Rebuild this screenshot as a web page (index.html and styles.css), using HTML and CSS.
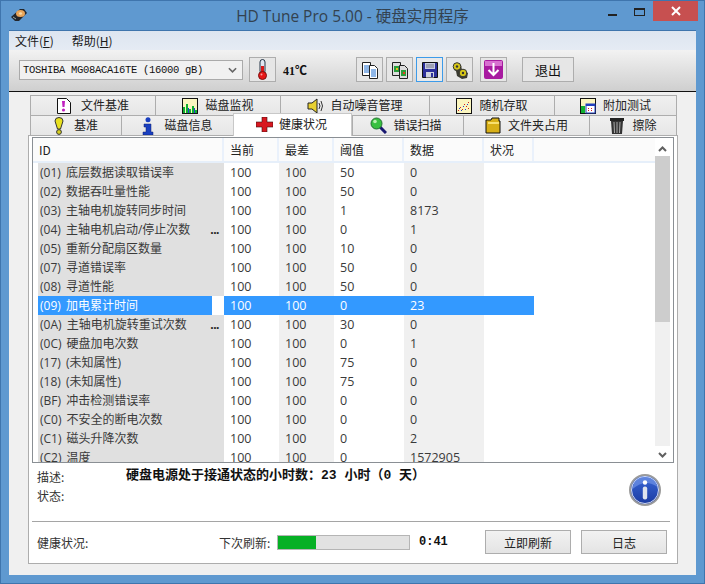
FILE: index.html
```html
<!DOCTYPE html>
<html lang="zh">
<head>
<meta charset="utf-8">
<title>HD Tune Pro 5.00 - 硬盘实用程序</title>
<link rel="stylesheet" href="styles.css">
</head>
<body>
<div class="window">
  <header class="titlebar">
    <svg class="app-icon" viewBox="0 0 16 14" width="16" height="14"><path d="M0 9 9 1h4l3 4-8 8H4z" fill="#23262b"/><ellipse cx="9.5" cy="5.5" rx="4.5" ry="3.6" fill="#e8a55a"/><ellipse cx="9.5" cy="5.5" rx="1.6" ry="1.2" fill="#f6d9a8"/><path d="M2 9l3 2" stroke="#9aa" stroke-width="1"/></svg>
    <div class="title">HD Tune Pro 5.00 - 硬盘实用程序</div>
    <div class="win-controls">
      <span class="win-min"></span>
      <span class="win-max"></span>
      <span class="win-close">
        <svg viewBox="0 0 10 10" width="10" height="10"><path d="M1 1l8 8M9 1L1 9" stroke="#fff" stroke-width="2"/></svg>
      </span>
    </div>
  </header>

  <div class="client">
    <nav class="menubar">
      <span class="menu-item">文件(<u>F</u>)</span>
      <span class="menu-item">帮助(<u>H</u>)</span>
    </nav>

    <div class="toolbar">
      <div class="combo">
        <span class="combo-text">TOSHIBA MG08ACA16TE (16000 gB)</span>
        <svg viewBox="0 0 10 6" width="9" height="6"><path d="M1 1l4 4 4-4" fill="none" stroke="#666" stroke-width="1.8"/></svg>
      </div>
      <button class="tool-btn">
        <svg viewBox="0 0 11 21" width="11" height="21"><rect x="3" y=".5" width="5" height="14" rx="2.5" fill="#dfe6f0" stroke="#234"/><rect x="4" y="7" width="3" height="9" fill="#d81818"/><circle cx="5.500" cy="16.500" r="4" fill="#e81818" stroke="#7a1010"/><circle cx="4.500" cy="15.500" r="1" fill="#f8a0a0"/></svg>
      </button>
      <span class="temp">41℃</span>
      <div class="tool-group">
        <button class="tool-btn">
          <svg viewBox="0 0 18 18" width="18" height="18"><path d="M1.5 1.5h8v13h-8z" fill="#fff" stroke="#222"/><path d="M3 5h5M3 7h5M3 9h5M3 11h5" stroke="#1e6fd0"/><path d="M8.5 4.5h5l3 3v10h-8z" fill="#fff" stroke="#222"/><path d="M10 9h5M10 11h5M10 13h5M10 15h5" stroke="#1e6fd0"/></svg>
        </button>
        <button class="tool-btn">
          <svg viewBox="0 0 18 18" width="18" height="18"><path d="M1.5 1.5h8v13h-8z" fill="#ddd" stroke="#222"/><rect x="3" y="5" width="5" height="6" fill="#2a9d3a"/><rect x="5" y="7" width="2" height="2" fill="#e8c020"/><path d="M8.5 4.5h5l3 3v10h-8z" fill="#ddd" stroke="#222"/><rect x="10" y="9" width="5" height="6" fill="#2a9d3a"/><rect x="12" y="11" width="2" height="2" fill="#e04020"/></svg>
        </button>
        <button class="tool-btn is-focus">
          <svg viewBox="0 0 16 16" width="16" height="16"><path d="M0.5 0.5h15v15h-15z" fill="#2c2f9a" stroke="#111"/><rect x="3" y="1" width="10" height="6" fill="#c8cce0"/><path d="M4 3h8M4 5h8" stroke="#778"/><rect x="4" y="10" width="8" height="5.5" fill="#cfd2de"/><rect x="9" y="11" width="2" height="4" fill="#2c2f9a"/></svg>
        </button>
        <button class="tool-btn">
          <svg viewBox="0 0 18 18" width="18" height="18"><path d="M3 9l1-7 6 2 1 5 6 3-1 5-5 1-5-3-1-5z" fill="#3a3a30"/><circle cx="6" cy="5.500" r="3.800" fill="#d8c818" stroke="#333"/><circle cx="12" cy="12" r="3.800" fill="#d8c818" stroke="#333"/><circle cx="6" cy="5.500" r="1.200" fill="#333"/><circle cx="12" cy="12" r="1.200" fill="#333"/></svg>
        </button>
      </div>
      <button class="tool-btn tool-btn-gap">
        <svg viewBox="0 0 19 19" width="19" height="19"><rect width="19" height="19" rx="2" fill="#a81aa0"/><path d="M1 1h17v5H1z" fill="#d870d0"/><path d="M9.500 3v12M4.500 10l5 5 5-5" fill="none" stroke="#fff" stroke-width="2"/></svg>
      </button>
      <button class="tool-btn exit-btn">退出</button>
    </div>

    <div class="tab-area">
      <div class="tab-row">
        <div class="tab w125 g10">
          <svg viewBox="0 0 14 16" width="14" height="16"><path d="M.5.5h9l4 4v11H.5z" fill="#fff" stroke="#111"/><path d="M5 3h3l-.5 6h-2z" fill="#c020c0"/><circle cx="6.5" cy="12" r="1.6" fill="#c020c0"/></svg><span>文件基准</span>
        </div>
        <div class="tab w125">
          <svg viewBox="0 0 16 16" width="16" height="16"><rect x=".5" y=".5" width="15" height="15" fill="#fbf6c0" stroke="#111"/><path d="M1 15V9h2v6zM4 15V6h2v9zM7 15v-4h2v4zM10 15V8h2v7zM13 15v-3h2v3z" fill="#10b030"/><path d="M6 15v-5h1v5zM12 15v-5h1v5z" fill="#2040d0"/></svg><span>磁盘监视</span>
        </div>
        <div class="tab w149">
          <svg viewBox="0 0 16 16" width="16" height="16"><path d="M1 5h4l5-4v14l-5-4H1z" fill="#e8d030" stroke="#222"/><path d="M12 5q2 3 0 6M14 3q3 5 0 10" fill="none" stroke="#333"/></svg><span>自动噪音管理</span>
        </div>
        <div class="tab w125">
          <svg viewBox="0 0 16 16" width="16" height="16"><rect x=".5" y=".5" width="15" height="15" fill="#fbf6c0" stroke="#111"/><path d="M2 12h1v1H2zM4 9h1v1H4zM6 11h1v1H6zM8 6h1v1H8zM10 8h1v1h-1zM12 4h1v1h-1zM12 10h1v1h-1z" fill="#d02020"/><path d="M3 10h1v1H3zM5 12h1v1H5zM7 8h1v1H7zM9 11h1v1H9zM11 6h1v1h-1z" fill="#2040d0"/></svg><span>随机存取</span>
        </div>
        <div class="tab w123">
          <svg viewBox="0 0 16 16" width="16" height="16"><rect x=".5" y=".5" width="15" height="15" fill="#fbf6c0" stroke="#111"/><path d="M1 15V8h4v7z" fill="#10b030"/><rect x="6" y="6" width="9" height="9" fill="#fff" stroke="#2040c0"/><path d="M6 6h9v2H6z" fill="#2040c0"/><path d="M8 10h1v1H8zM11 10h1v1h-1zM8 12h1v1H8zM11 12h1v1h-1z" fill="#d02020"/></svg><span>附加测试</span>
        </div>
      </div>
      <div class="tab-row">
        <div class="tab w91 g10">
          <svg viewBox="0 0 10 18" width="10" height="18"><path d="M1 4q0-3.500 4-3.500T9 4L6.500 12h-3z" fill="#e8e020" stroke="#333"/><circle cx="5" cy="15" r="2.400" fill="#d8d020" stroke="#333"/></svg><span>基准</span>
        </div>
        <div class="tab w112 g10">
          <svg viewBox="0 0 12 18" width="12" height="18"><circle cx="6" cy="2.800" r="2.500" fill="#1a40c0"/><path d="M2 7h7v8h2v3H1v-3h3v-5H2z" fill="#1a40c0" stroke="#102070" stroke-width=".5"/></svg><span>磁盘信息</span>
        </div>
        <div class="tab tab-active w119 g6">
          <svg viewBox="0 0 17 15" width="17" height="15"><path d="M6 0h5v5h6v5h-6v5H6v-5H0V5h6z" fill="#d81820" stroke="#3a1010" stroke-width=".6"/></svg><span>健康状况</span>
        </div>
        <div class="tab w111 g6 tab-scan">
          <svg viewBox="0 0 17 17" width="17" height="17"><path d="M10 10l6 6" stroke="#181870" stroke-width="3"/><circle cx="6.500" cy="6.500" r="5.500" fill="#38c040" stroke="#207030"/><circle cx="5" cy="4.500" r="1.800" fill="#b8f0b0"/></svg><span>错误扫描</span>
        </div>
        <div class="tab w126">
          <svg viewBox="0 0 16 17" width="16" height="17"><path d="M1 3h5l1-2h7v3h1v12H1z" fill="#d8b018" stroke="#111"/><path d="M3 5h11v2H3z" fill="#f8e070"/></svg><span>文件夹占用</span>
        </div>
        <div class="tab w88">
          <svg viewBox="0 0 16 17" width="16" height="17"><path d="M1 1h14v3H1z" fill="#222"/><path d="M2 4h12l-1 13H3z" fill="#333"/><path d="M5 5l.5 11M8 5v11M11 5l-.5 11" stroke="#aaa"/></svg><span>擦除</span>
        </div>
      </div>

      <div class="panel">
        <div class="listbox">
          <div class="list-main">
            <div class="list-head">
              <span class="hcell c-id">ID</span>
              <span class="hcell c-cur">当前</span>
              <span class="hcell c-worst">最差</span>
              <span class="hcell c-thr">阈值</span>
              <span class="hcell c-data">数据</span>
              <span class="hcell c-status">状况</span>
            </div>
            <div class="row"><span class="cell c-id"><span>(01) 底层数据读取错误率</span></span><span class="cell c-cur">100</span><span class="cell c-worst">100</span><span class="cell c-thr">50</span><span class="cell c-data">0</span><span class="cell c-status"></span></div>
            <div class="row"><span class="cell c-id"><span>(02) 数据吞吐量性能</span></span><span class="cell c-cur">100</span><span class="cell c-worst">100</span><span class="cell c-thr">50</span><span class="cell c-data">0</span><span class="cell c-status"></span></div>
            <div class="row"><span class="cell c-id"><span>(03) 主轴电机旋转同步时间</span></span><span class="cell c-cur">100</span><span class="cell c-worst">100</span><span class="cell c-thr">1</span><span class="cell c-data">8173</span><span class="cell c-status"></span></div>
            <div class="row"><span class="cell c-id"><span>(04) 主轴电机启动/停止次数</span><b class="more">...</b></span><span class="cell c-cur">100</span><span class="cell c-worst">100</span><span class="cell c-thr">0</span><span class="cell c-data">1</span><span class="cell c-status"></span></div>
            <div class="row"><span class="cell c-id"><span>(05) 重新分配扇区数量</span></span><span class="cell c-cur">100</span><span class="cell c-worst">100</span><span class="cell c-thr">10</span><span class="cell c-data">0</span><span class="cell c-status"></span></div>
            <div class="row"><span class="cell c-id"><span>(07) 寻道错误率</span></span><span class="cell c-cur">100</span><span class="cell c-worst">100</span><span class="cell c-thr">50</span><span class="cell c-data">0</span><span class="cell c-status"></span></div>
            <div class="row"><span class="cell c-id"><span>(08) 寻道性能</span></span><span class="cell c-cur">100</span><span class="cell c-worst">100</span><span class="cell c-thr">50</span><span class="cell c-data">0</span><span class="cell c-status"></span></div>
            <div class="row row-selected"><span class="cell c-id"><span>(09) 加电累计时间</span></span><span class="cell c-cur">100</span><span class="cell c-worst">100</span><span class="cell c-thr">0</span><span class="cell c-data">23</span><span class="cell c-status"></span></div>
            <div class="row"><span class="cell c-id"><span>(0A) 主轴电机旋转重试次数</span><b class="more">...</b></span><span class="cell c-cur">100</span><span class="cell c-worst">100</span><span class="cell c-thr">30</span><span class="cell c-data">0</span><span class="cell c-status"></span></div>
            <div class="row"><span class="cell c-id"><span>(0C) 硬盘加电次数</span></span><span class="cell c-cur">100</span><span class="cell c-worst">100</span><span class="cell c-thr">0</span><span class="cell c-data">1</span><span class="cell c-status"></span></div>
            <div class="row"><span class="cell c-id"><span>(17) (未知属性)</span></span><span class="cell c-cur">100</span><span class="cell c-worst">100</span><span class="cell c-thr">75</span><span class="cell c-data">0</span><span class="cell c-status"></span></div>
            <div class="row"><span class="cell c-id"><span>(18) (未知属性)</span></span><span class="cell c-cur">100</span><span class="cell c-worst">100</span><span class="cell c-thr">75</span><span class="cell c-data">0</span><span class="cell c-status"></span></div>
            <div class="row"><span class="cell c-id"><span>(BF) 冲击检测错误率</span></span><span class="cell c-cur">100</span><span class="cell c-worst">100</span><span class="cell c-thr">0</span><span class="cell c-data">0</span><span class="cell c-status"></span></div>
            <div class="row"><span class="cell c-id"><span>(C0) 不安全的断电次数</span></span><span class="cell c-cur">100</span><span class="cell c-worst">100</span><span class="cell c-thr">0</span><span class="cell c-data">0</span><span class="cell c-status"></span></div>
            <div class="row"><span class="cell c-id"><span>(C1) 磁头升降次数</span></span><span class="cell c-cur">100</span><span class="cell c-worst">100</span><span class="cell c-thr">0</span><span class="cell c-data">2</span><span class="cell c-status"></span></div>
            <div class="row"><span class="cell c-id"><span>(C2) 温度</span></span><span class="cell c-cur">100</span><span class="cell c-worst">100</span><span class="cell c-thr">0</span><span class="cell c-data">1572905</span><span class="cell c-status"></span></div>
          </div>
          <div class="scrollbar">
            <svg class="sb-arrow" viewBox="0 0 9 6" width="9" height="6"><path d="M1 5l3.500-3.500L8 5" fill="none" stroke="#606060" stroke-width="2"/></svg>
            <div class="sb-track"><div class="sb-thumb"></div></div>
            <svg class="sb-arrow" viewBox="0 0 9 6" width="9" height="6"><path d="M1 1l3.500 3.500L8 1" fill="none" stroke="#606060" stroke-width="2"/></svg>
          </div>
        </div>

        <div class="details">
          <div class="labels">
            <div>描述:</div>
            <div>状态:</div>
          </div>
          <div class="desc">硬盘电源处于接通状态的小时数：23 小时（0 天）</div>
          <svg class="info-icon" viewBox="0 0 32 32" width="32" height="32">
            <defs>
              <linearGradient id="infoFill" x1="0" y1="0" x2="0" y2="1"><stop offset="0" stop-color="#3a68d8"/><stop offset="1" stop-color="#1a3aa0"/></linearGradient>
            </defs>
            <circle cx="16" cy="16" r="15" fill="url(#infoFill)" stroke="#9a9a9a" stroke-width="2"/>
            <circle cx="16" cy="16" r="13.500" fill="none" stroke="#fff" stroke-width=".8"/>
            <path d="M3.500 15Q16 4 28.500 13 26 3 16 3 5 3 3.500 15z" fill="#6f93e6" opacity=".7"/>
            <circle cx="16" cy="8.500" r="2.200" fill="#fff"/>
            <rect x="13.800" y="12.500" width="4.400" height="13" rx="2" fill="#dfe4ee"/>
          </svg>
        </div>

        <div class="status">
          <span class="status-label">健康状况:</span>
          <span class="refresh-label">下次刷新:</span>
          <div class="progress"><div class="progress-fill"></div></div>
          <span class="countdown">0:41</span>
          <button class="action-btn">立即刷新</button>
          <button class="action-btn">日志</button>
        </div>
      </div>
    </div>
  </div>
</div>
</body>
</html>
```

FILE: styles.css
```css
* { box-sizing: border-box; }
html, body { margin: 0; padding: 0; }
body {
  width: 705px;
  height: 584px;
  overflow: hidden;
  font: 12px "Noto Sans CJK SC", "Open Sans", sans-serif;
  color: #222;
}
.window {
  width: 705px;
  height: 584px;
  display: flex;
  flex-direction: column;
  padding: 0 8px 8px;
  background: #5f99d0;
  border: 1px solid #3f75ad;
}
.titlebar {
  height: 29px;
  flex: none;
  display: flex;
  align-items: center;
  position: relative;
  margin: 0 -8px;
  padding-left: 10px;
}
.app-icon { flex: none; margin-top: -1px; }
.title {
  position: absolute;
  left: 0;
  right: 0;
  top: 4px;
  text-align: center;
  font: 15.500px/22px "Open Sans", "Noto Sans CJK SC", sans-serif;
  color: #33424f;
}
.win-controls {
  position: absolute;
  right: 6px;
  top: 0;
  display: flex;
  align-items: flex-start;
}
.win-min {
  width: 9px;
  height: 2px;
  background: #222;
  margin: 13px 17px 0 0;
}
.win-max {
  width: 11px;
  height: 8px;
  border: 1px solid #222;
  border-top-width: 2px;
  margin: 7px 8px 0 0;
}
.win-close {
  width: 45px;
  height: 20px;
  background: #c75050;
  display: flex;
  align-items: center;
  justify-content: center;
}
.client {
  flex: 1;
  display: flex;
  flex-direction: column;
  background: #f0f0f0;
  border-top: 1px solid #3f75ad;
  min-height: 0;
}
.menubar {
  height: 19px;
  flex: none;
  display: flex;
  align-items: center;
  gap: 18px;
  padding-left: 6px;
  background: linear-gradient(#dde5f0, #e5ebf4);
  color: #1a1a1a;
}
.menu-item { line-height: 19px; }
.toolbar {
  height: 42px;
  flex: none;
  display: flex;
  align-items: center;
  padding: 0 0 2px 10px;
  background: linear-gradient(#f2f2f2, #cfcfcf);
  border-bottom: 1px solid #111;
}
.combo {
  width: 224px;
  height: 20px;
  display: flex;
  align-items: center;
  justify-content: space-between;
  padding: 0 5px 0 3px;
  background: #f1f1f1;
  border: 1px solid #aaa;
}
.combo-text {
  font: 10.500px "Liberation Mono", monospace;
  color: #111;
  white-space: nowrap;
  letter-spacing: -.3px;
}
.tool-btn {
  width: 27px;
  height: 25px;
  padding: 0;
  flex: none;
  display: flex;
  align-items: center;
  justify-content: center;
  background: #e6e6e6;
  border: 1px solid #adadad;
  font: inherit;
  color: #111;
}
.toolbar > .tool-btn:nth-child(2) { margin-left: 6px; }
.is-focus { border-color: #3d9be9; background: #e9e9e9; }
.temp {
  width: 73px;
  margin-left: 7px;
  font: bold 12px "Liberation Serif", "Noto Sans CJK SC", serif;
  color: #111;
}
.tool-group { display: flex; gap: 3px; }
.tool-btn-gap { margin-left: 7px; }
.exit-btn { width: 52px; margin-left: 15px; font-size: 13px; }

.tab-area {
  flex: 1;
  display: flex;
  flex-direction: column;
  padding: 3px 18px 11px 19px;
  min-height: 0;
}
.tab-row {
  height: 20px;
  display: flex;
  margin: 0 2px;
  flex: none;
}
.tab {
  height: 20px;
  flex: none;
  display: flex;
  align-items: center;
  justify-content: center;
  gap: 7px;
  background: linear-gradient(#f0f0f0, #e6e6e6);
  border: 1px solid #adadad;
  border-right-width: 0;
  border-bottom-width: 0;
  white-space: nowrap;
  color: #222;
  font-size: 12px;
  line-height: 18px;
}
.tab span { margin-top: -1px; }
.g6 { gap: 6px; }
.g10 { gap: 10px; }
.tab-scan { padding-right: 4px; }
.tab:last-child { border-right-width: 1px; }
.tab-active {
  height: 23px;
  margin-top: -2px;
  background: #fff;
  border-right-width: 1px;
  border-color: #c8c8c8;
  position: relative;
  z-index: 1;
  padding: 0 2px 2px 0;
}
.w88 { width: 88px; }
.w91 { width: 91px; }
.w111 { width: 111px; }
.w112 { width: 112px; }
.w119 { width: 119px; }
.w123 { width: 123px; }
.w125 { width: 125px; }
.w126 { width: 126px; }
.w149 { width: 149px; }

.panel {
  flex: 1;
  display: flex;
  flex-direction: column;
  background: #fff;
  border: 1px solid #adadad;
  padding: 1px 3px 0 3px;
  min-height: 0;
}
.listbox {
  height: 326px;
  flex: none;
  display: flex;
  background: #fff;
  border: 1px solid #8a8f94;
  overflow: hidden;
}
.list-main { flex: 1; min-width: 0; overflow: hidden; }
.list-head {
  height: 25px;
  display: flex;
  background: #fbfbfb;
  border-bottom: 2px solid #e6effa;
}
.hcell {
  display: block;
  padding: 3px 0 0 6px;
  font-size: 12px;
  line-height: 18px;
  border-right: 2px solid #eaf1fb;
  color: #222;
}
.row { height: 19px; display: flex; }
.cell {
  display: block;
  padding-left: 6px;
  font: 12.500px/19px "Open Sans", "Noto Sans CJK SC", sans-serif;
  color: #3a3a3a;
  white-space: nowrap;
}
.c-id { width: 191px; flex: none; }
.c-cur { width: 55px; flex: none; }
.c-worst { width: 55px; flex: none; }
.c-thr { width: 70px; flex: none; }
.c-data { width: 80px; flex: none; }
.c-status { width: 50px; flex: none; }
.cell.c-id {
  display: flex;
  justify-content: space-between;
  margin-left: 5px;
  width: 186px;
  padding: 0 5px 0 2px;
  background: #e0e0e0;
  font-size: 12px;
  word-spacing: 2px;
}
.more { font-weight: bold; color: #222; letter-spacing: -.5px; }
.cell.c-worst, .cell.c-data { background: #f0f0f0; }
.row-selected .cell { background: #3399ff; color: #fff; }
.row-selected .cell.c-id { background: linear-gradient(90deg, #3399ff 174px, #fff 174px); }
.scrollbar {
  width: 15px;
  flex: none;
  margin: 1px 3px 0 0;
  display: flex;
  flex-direction: column;
  align-items: center;
  background: #fff;
}
.sb-arrow { flex: none; margin: 7px 0 4px; }
.sb-arrow:last-child { margin: 6px 0 4px; }
.sb-track { flex: 1; width: 100%; background: #f0f0f0; }
.sb-thumb { height: 166px; background: #cdcdcd; }

.details {
  height: 59px;
  flex: none;
  display: flex;
  align-items: flex-start;
  border-bottom: 1px solid #a5a5a5;
  margin: 0 4px 0 0;
}
.labels {
  width: 94px;
  flex: none;
  padding: 4px 0 0 5px;
  font-size: 12px;
  line-height: 19px;
  color: #333;
}
.desc {
  width: 482px;
  flex: none;
  padding-top: 5px;
  font: bold 13px/15px "Liberation Mono", "Noto Sans CJK SC", monospace;
  color: #111;
  white-space: nowrap;
}
.info-icon { flex: none; margin: 11px 0 0 21px; }
.status {
  flex: 1;
  display: flex;
  align-items: center;
  padding: 0 8px 1px 5px;
}
.status-label { width: 182px; flex: none; color: #333; }
.refresh-label { width: 58px; flex: none; color: #333; }
.progress {
  width: 133px;
  height: 15px;
  flex: none;
  background: #e2e2e2;
  border: 1px solid #b5b5b5;
}
.progress-fill { width: 38px; height: 100%; background: #06b025; }
.countdown {
  width: 66px;
  margin-left: 9px;
  flex: none;
  font: bold 12px "Liberation Mono", monospace;
  color: #111;
}
.action-btn {
  width: 86px;
  height: 24px;
  flex: none;
  margin-right: 10px;
  padding: 0;
  background: linear-gradient(#f2f2f2, #e4e4e4);
  border: 1px solid #adadad;
  font: 12px "Noto Sans CJK SC", sans-serif;
  color: #222;
}
.action-btn:last-child { margin-right: 0; }
```
